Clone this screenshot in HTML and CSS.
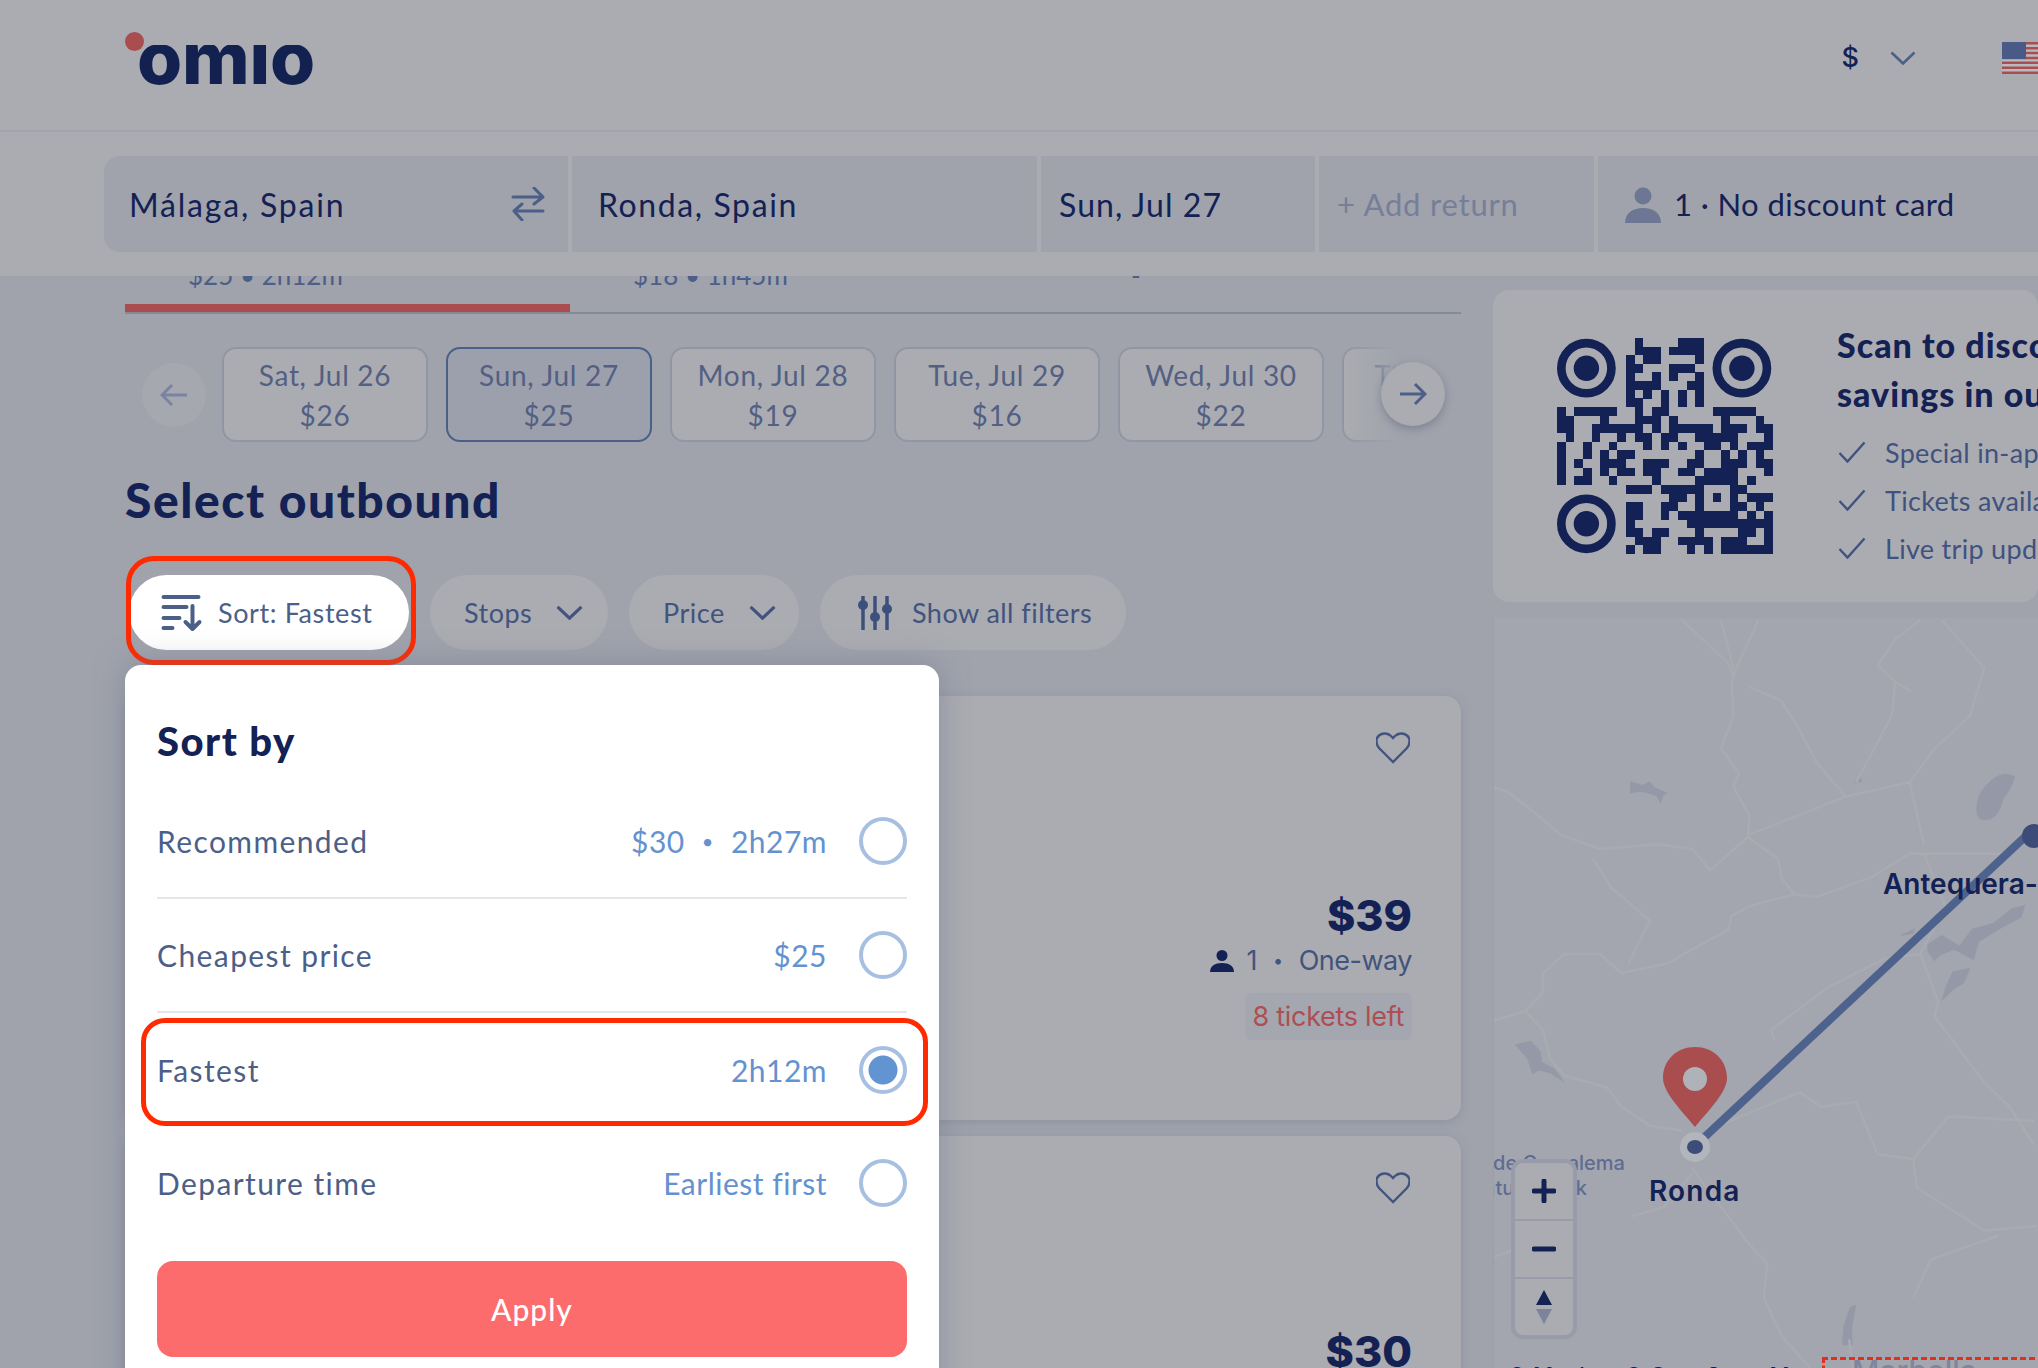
FILE: index.html
```html
<!DOCTYPE html>
<html lang="en">
<head>
<meta charset="utf-8">
<title>Omio - Select outbound</title>
<link rel="stylesheet" href="styles.css">
</head>
<body>
<div class="page">
  <header class="topbar">
    <div class="logo"><span class="logo-dot"></span><span class="logo-text">omio</span></div>
    <div class="top-actions">
      <span class="currency">$</span>
      <svg class="chev-top" viewBox="0 0 26 14"><path d="M1.5 1.5 13 12.5 24.5 1.5"/></svg>
      <svg class="flag" viewBox="0 0 60 32">
        <rect width="60" height="32" fill="#a84e50"/>
        <path d="M0 3.7h60M0 8.6h60M0 13.5h60M0 18.4h60M0 23.3h60M0 28.2h60" stroke="#b9bac0" stroke-width="2.4"/>
        <rect width="24" height="17" fill="#4a5a86"/>
      </svg>
    </div>
  </header>

  <section class="searchbar">
    <div class="field field-from"><span>Málaga, Spain</span>
      <svg class="swap" viewBox="0 0 34 34"><path d="M2 10h29M23 1l9 9-9 7M32 24H3M11 17l-8 7 8 9"/></svg>
    </div>
    <div class="field field-to">Ronda, Spain</div>
    <div class="field field-date">Sun, Jul 27</div>
    <div class="field field-return">+ Add return</div>
    <div class="field field-pax">
      <svg class="pax-big" viewBox="0 0 36 36"><circle cx="18" cy="9" r="8.5"/><path d="M0 36c0-10 8-15 18-15s18 5 18 15z"/></svg>
      <span>1 · No discount card</span>
    </div>
  </section>

  <main class="main">
    <div class="results">
      <div class="tabs">
        <div class="tab tab-active"><span>$25 • 2h12m</span></div>
        <div class="tab"><span>$18 • 1h45m</span></div>
        <div class="tab tab-none"><span>-</span></div>
      </div>

      <div class="dates">
        <button class="arrow arrow-prev"><svg viewBox="0 0 28 24"><path d="M27 12H2M12 2 2 12l10 10"/></svg></button>
        <div class="date"><span>Sat, Jul 26</span><span>$26</span></div>
        <div class="date date-on"><span>Sun, Jul 27</span><span>$25</span></div>
        <div class="date"><span>Mon, Jul 28</span><span>$19</span></div>
        <div class="date"><span>Tue, Jul 29</span><span>$16</span></div>
        <div class="date"><span>Wed, Jul 30</span><span>$22</span></div>
        <div class="date date-cut"><span>Thu, Jul 31</span><span>$24</span></div>
        <div class="date-fade"></div>
        <button class="arrow arrow-next"><svg viewBox="0 0 28 24"><path d="M1 12h25M16 2l10 10-10 10"/></svg></button>
      </div>

      <h1 class="heading">Select outbound</h1>

      <div class="chips">
        <button class="chip chip-sort">
          <svg class="ico-sort" viewBox="0 0 36 36"><path d="M1 2h35M1 12h23M1 23h16M1 33h9M30 11v23M23 27l7 7 7-7"/></svg>
          Sort: Fastest
        </button>
        <button class="chip chip-stops">Stops <svg class="chev" viewBox="0 0 26 14"><path d="M1.5 1.5 13 12.5 24.5 1.5"/></svg></button>
        <button class="chip chip-price">Price <svg class="chev" viewBox="0 0 26 14"><path d="M1.5 1.5 13 12.5 24.5 1.5"/></svg></button>
        <button class="chip chip-all">
          <svg class="ico-filter" viewBox="0 0 34 34"><path class="sl" d="M5 1v32M17 1v32M29 1v32"/><circle cx="5" cy="9" r="5"/><circle cx="17" cy="21" r="5"/><circle cx="29" cy="13" r="5"/></svg>
          Show all filters
        </button>
      </div>

      <article class="card">
        <svg class="heart" viewBox="0 0 34 32"><path d="M17 30 3.5 16.5C-.5 12-.5 6.500 3 3.500c3.500-3 9-2.500 12 .5l2 2 2-2c3-3 8.500-3.500 12-.5s3.500 8.500-.5 13z"/></svg>
        <div class="fare">
          <div class="price">$39</div>
          <div class="fare-meta">
            <svg class="pax-small" viewBox="0 0 24 22"><circle cx="12" cy="5.500" r="5.500"/><path d="M0 22c0-6 5-9 12-9s12 3 12 9z"/></svg>
            <span>1</span><span class="dot">•</span><span>One-way</span>
          </div>
          <div class="left-badge">8 tickets left</div>
        </div>
      </article>
      <article class="card card-next">
        <svg class="heart" viewBox="0 0 34 32"><path d="M17 30 3.500 16.500C-.5 12-.5 6.500 3 3.500c3.500-3 9-2.500 12 .5l2 2 2-2c3-3 8.500-3.500 12-.5s3.500 8.500-.5 13z"/></svg>
        <div class="fare"><div class="price">$30</div></div>
      </article>
    </div>

    <aside class="side">
      <section class="promo">
        <svg class="qr" viewBox="0 0 25 25">
          <g class="finder"><circle cx="3.400" cy="3.500" r="2.900"/><circle cx="21.400" cy="3.500" r="2.900"/><circle cx="3.400" cy="21.500" r="2.900"/></g>
          <g class="finder-dot"><circle cx="3.400" cy="3.500" r="1.470"/><circle cx="21.400" cy="3.500" r="1.470"/><circle cx="3.400" cy="21.500" r="1.470"/></g>
          <path class="modules" d="M9 .5h1M14 .5h3M9 1.500h3M13 1.500h4M8 2.500h1M10 2.500h2M16 2.500h1M8 3.500h2M13 3.500h3M8 4.500h1M11 4.500h1M13 4.500h1M16 4.500h1M8 5.500h4M15 5.500h2M8 6.500h1M10 6.500h1M12 6.500h1M14 6.500h1M16 6.500h1M8 7.500h2M12 7.500h1M14 7.500h1M16 7.500h1M0 8.500h1M2 8.500h5M9 8.500h1M11 8.500h2M18 8.500h5M0 9.500h2M5 9.500h1M9 9.500h3M13 9.500h1M19 9.500h1M23 9.500h1M0 10.500h2M4 10.500h6M11 10.500h1M13 10.500h5M19 10.500h3M23 10.500h2M1 11.500h1M4 11.500h1M7 11.500h1M9 11.500h2M12 11.500h2M16 11.500h5M24 11.500h1M0 12.500h1M3 12.500h1M6 12.500h1M10 12.500h1M12 12.500h1M14 12.500h1M17 12.500h2M20 12.500h1M22 12.500h3M0 13.500h1M3 13.500h1M5 13.500h1M7 13.500h2M16 13.500h1M19 13.500h1M21 13.500h1M23 13.500h1M0 14.500h1M2 14.500h1M5 14.500h3M10 14.500h3M15 14.500h2M19 14.500h3M23 14.500h2M0 15.500h1M3 15.500h1M5 15.500h1M7 15.500h2M10 15.500h2M14 15.500h2M17 15.500h4M24 15.500h1M0 16.500h1M2 16.500h2M6 16.500h1M11 16.500h1M16 16.500h5M22 16.500h1M8 17.500h3M12 17.500h5M20 17.500h2M13 18.500h2M16 18.500h1M18 18.500h1M20 18.500h1M22 18.500h3M8 19.500h2M12 19.500h2M16 19.500h1M20 19.500h2M23 19.500h1M8 20.500h2M12 20.500h1M14 20.500h7M22 20.500h1M24 20.500h1M8 21.500h1M15 21.500h5M20 21.500h5M8 22.500h2M11 22.500h2M16 22.500h1M21 22.500h2M24 22.500h1M9 23.500h3M14 23.500h4M19 23.500h3M24 23.500h1M8 24.500h1M10 24.500h2M15 24.500h1M17 24.500h1M19 24.500h6"/>
        </svg>
        <div class="promo-text">
          <h2 class="promo-title">Scan to discover<br>savings in our app</h2>
          <ul class="promo-list">
            <li><svg class="tick" viewBox="0 0 28 22"><path d="M1.500 12l8 8.500L26.500 1.500"/></svg>Special in-app deals</li>
            <li><svg class="tick" viewBox="0 0 28 22"><path d="M1.500 12l8 8.500L26.500 1.500"/></svg>Tickets available offline</li>
            <li><svg class="tick" viewBox="0 0 28 22"><path d="M1.500 12l8 8.500L26.500 1.500"/></svg>Live trip updates</li>
          </ul>
        </div>
      </section>

      <section class="map">
        <svg class="map-art" viewBox="0 0 544 750">
          <g transform="translate(-14 2) scale(.3559 .4771)">
            <g class="lakes">
              <path d="M1398 400c0-35 18-48 38-62 25-18 50-18 70-10-6 22-22 34-34 50-8 22-18 36-38 40-18 4-36 2-36-18z"/>
              <path d="M425 338l35 8 20-8 12 12 38 12-12 6-8 18-10-16-30-8-22-2-24 4z"/>
              <path d="M100 890l45-8 28 22 4 22 35 14 30 30-42-20-30-6-20 8-14-32z"/>
              <path d="M1185 660l40-14-5 12-35 4zM1260 680l40-20 50 22 35-35 60-12 50-30 40-8-10 26-50 20-40 18-30 14-15 38-25-10-30-12-40 12-15 12-20-20z"/>
              <path d="M1298 800l15-35 18-28 50-8-18 32-30 14z"/>
              <path d="M1020 1520l4-40 18-40 18-5-12 50 2 35z"/>
              <path d="M1052 340l20-12 4 12z"/>
            </g>
            <g class="roads">
              <path d="M570 0 700 90l15 25L785 0M680 0l35 100"/>
              <path d="M715 115l-5 25 5 60-35 70 50 50-15 30 45 60-5 45-105 70-50-45-100-10-160 10-110-30-80-50-70-40-40-10"/>
              <path d="M755 455l85 45 10 40 35 35 65 5 150-40 110-50 90 0 200 0"/>
              <path d="M885 575l-125 25-50 20-10 30-100 40-70 30-130 20-60-40-100 0-60 40 0 40-50 40-90 20"/>
              <path d="M130 820l50 40 20 60 40 35 120 25 40 40 80 40 90 10"/>
              <path d="M320 500l50 60 110 70-60 90"/>
              <path d="M760 140l90 30 50 60 50 70 80 70 180-30 40 130M1030 370l-270 80"/>
              <path d="M1210 340l70-70 100-70 40-100-120-100M1170 130l-50-35 50-55 70-40M1170 130l45 20M1170 130l-10 70-100 140"/>
              <path d="M1250 490l60 110-70 100 50 100-10 30 70 70 70 70 70 50 70 80"/>
              <path d="M640 1070l260-80 60 30 100-10 60 110 100 10 100-90 240 10"/>
              <path d="M1220 1130l10 60 190 90 148-10M830 880l-10-20 160-90 160-60 100-10"/>
              <path d="M600 1150l90 90 60 60 60 50-10 70 50 80 80 68M430 1250l90-20 80-70M1220 1420l50-80 190-50"/>
              <path d="M180 1300 20 1340M1050 1568l-10-60"/>
            </g>
          </g>
          <path class="route" d="M201 529 534 217"/>
        </svg>

        <span class="route-end"></span>
        <span class="place place-ant">Antequera-</span>
        <span class="park">Sierra de Grazalema<br>Natural Park</span>
        <span class="stop-ring"><span class="stop-dot"></span></span>
        <svg class="pin" viewBox="0 0 64 80"><path d="M32 0C14 0 0 13 0 31c0 14 18 32 32 49 14-17 32-35 32-49C64 13 50 0 32 0z"/><circle class="pin-hole" cx="32" cy="32" r="12"/></svg>
        <span class="place place-ronda">Ronda</span>

        <div class="map-ctrl">
          <div class="ctrl-cell"><svg class="ctrl-plus" viewBox="0 0 24 24"><path d="M2 12h20M12 2v20"/></svg></div>
          <div class="ctrl-cell"><svg class="ctrl-plus" viewBox="0 0 24 24"><path d="M2 12h20"/></svg></div>
          <div class="ctrl-cell"><svg class="ctrl-comp" viewBox="0 0 16 34"><path d="M8 0l8 15H0z"/><path class="down" d="M0 19h16L8 34z"/></svg></div>
        </div>

        <div class="attrib">© Mapbox © OpenStreetMap</div>
        <div class="dashed"><span class="town">Marbella</span></div>
      </section>
    </aside>
  </main>

  <div class="sort-mark"></div>

  <div class="popup">
    <h2 class="popup-title">Sort by</h2>
    <div class="opt opt-line"><span class="opt-name">Recommended</span><span class="opt-val">$30<i class="sep">•</i>2h27m</span><span class="radio"></span></div>
    <div class="opt opt-line"><span class="opt-name">Cheapest price</span><span class="opt-val">$25</span><span class="radio"></span></div>
    <div class="opt opt-marked"><span class="opt-name">Fastest</span><span class="opt-val">2h12m</span><span class="radio radio-on"></span></div>
    <div class="opt"><span class="opt-name">Departure time</span><span class="opt-val">Earliest first</span><span class="radio"></span></div>
    <button class="apply">Apply</button>
  </div>
</div>
</body>
</html>
```

FILE: styles.css
```css
* { box-sizing: border-box; }
html, body { margin: 0; padding: 0; }
body { font-family: "Lato", "Noto Sans", sans-serif; color: #132154; background: #a0a3ac; }
button { font: inherit; color: inherit; border: 0; padding: 0; }
h1, h2, ul { margin: 0; padding: 0; }
svg { display: block; flex: none; }

.page { position: relative; width: 2038px; height: 1368px; overflow: hidden; background: #a0a3ac; }

/* header */
.topbar { height: 132px; background: #abacb1; border-bottom: 2px solid #a2a4af; display: flex; align-items: center; justify-content: space-between; padding: 0 0 14px 125px; }
.logo { position: relative; width: 190px; height: 60px; }
.logo-dot { position: absolute; left: 0; top: 4px; width: 19px; height: 19px; border-radius: 50%; background: #a94d4e; }
.logo-text { position: absolute; left: 12px; top: 0; font: 800 73px/60px "Inter", sans-serif; color: #12214f; letter-spacing: -.2px; clip-path: inset(17px -5px -2px -5px); }
.top-actions { display: flex; align-items: center; margin-right: -24px; }
.currency { font: 500 27px/32px "Inter", sans-serif; }
.chev-top { width: 26px; height: 14px; margin-left: 31px; fill: none; stroke: #4c5f88; stroke-width: 2.600; }
.flag { width: 60px; height: 32px; margin-left: 86px; }

/* search */
.searchbar { height: 144px; background: #abacb1; display: flex; gap: 4px; padding: 24px 0 24px 104px; }
.field { flex: none; height: 96px; background: #a0a3ac; display: flex; align-items: center; font-size: 32px; letter-spacing: 1.6px; }
.field-from { width: 464px; padding: 0 23px 0 25px; justify-content: space-between; border-radius: 16px 0 0 16px; letter-spacing: 1.8px; }
.field-to { width: 465px; padding-left: 26px; }
.field-date { width: 274px; padding-left: 18px; letter-spacing: 1.1px; }
.field-return { width: 275px; padding-left: 18px; color: #767e99; font-size: 31px; letter-spacing: .8px; }
.field-pax { width: 460px; padding-left: 27px; gap: 13px; font-size: 31px; letter-spacing: .4px; }
.swap { width: 34px; height: 34px; fill: none; stroke: #4c5f88; stroke-width: 3; stroke-linecap: round; stroke-linejoin: round; }
.pax-big { width: 36px; height: 36px; fill: #6d7693; margin-top: 2px; }

/* layout */
.main { display: flex; gap: 32px; height: 1092px; overflow: hidden; }
.results { flex: none; width: 1461px; padding-left: 125px; }
.side { flex: none; width: 545px; padding-top: 14px; }

/* tabs */
.tabs { height: 38px; display: flex; overflow: hidden; border-bottom: 2px solid #858a9a; }
.tab { flex: none; width: 445px; height: 36px; padding-left: 63px; position: relative; font-size: 26px; line-height: 34px; color: #4c5f88; }
.tab span { display: block; margin-top: -18px; }
.tab-active::after { content: ""; position: absolute; left: 0; right: 0; bottom: 0; height: 8px; background: #a94d4e; }
.tab-none { padding-left: 116px; }

/* dates */
.dates { position: relative; height: 95px; margin-top: 33px; margin-left: 17px; width: 1303px; display: flex; gap: 18px; overflow: clip; overflow-clip-margin: 20px; }
.arrow { width: 64px; height: 64px; border-radius: 50%; background: #a6a8b0; display: flex; align-items: center; justify-content: center; align-self: center; flex: none; }
.arrow svg { width: 28px; height: 24px; fill: none; stroke: #7a84a0; stroke-width: 3; }
.arrow-prev { margin-right: -2px; }
.arrow-next { position: absolute; right: 0; top: 15px; background: #abacb1; box-shadow: 0 3px 8px rgba(60, 70, 100, .35); }
.arrow-next svg { stroke: #4c5f88; }
.date { flex: none; width: 206px; height: 95px; border: 2px solid #9196a7; border-radius: 14px; background: #abacb1; display: flex; flex-direction: column; align-items: center; justify-content: center; gap: 6px; font-size: 28px; line-height: 34px; color: #535f83; letter-spacing: .7px; }
.date-on { background: #9ca0ac; border-color: #4c5f88; }
.date-fade { position: absolute; right: -20px; top: 0; width: 123px; height: 95px; background: linear-gradient(90deg, rgba(160, 163, 172, 0), #a0a3ac 46%); }

/* heading + chips */
.heading { font-size: 48px; line-height: 54px; font-weight: 900; margin-top: 31px; letter-spacing: 1.55px; }
.chips { display: flex; gap: 21px; margin-top: 48px; padding-left: 4px; }
.chip { height: 75px; border-radius: 38px; background: #abacb1; display: flex; align-items: center; font-size: 27px; color: #42537e; letter-spacing: .5px; }
.chip-sort { width: 280px; padding-left: 33px; gap: 19px; background: #fff; color: #4c5f88; letter-spacing: .6px; }
.chip-stops { width: 178px; padding-left: 34px; gap: 24px; }
.chip-price { width: 170px; padding-left: 34px; gap: 24px; }
.chip-all { width: 306px; padding-left: 38px; gap: 20px; letter-spacing: .45px; }
.chev { width: 27px; height: 15px; fill: none; stroke: #42537e; stroke-width: 3; }
.ico-sort { width: 37px; height: 36px; fill: none; stroke: #4c5f88; stroke-width: 4; stroke-linecap: round; stroke-linejoin: round; overflow: visible; }
.ico-filter { width: 34px; height: 34px; fill: #3d4f7c; }
.ico-filter .sl { fill: none; stroke: #3d4f7c; stroke-width: 3.500; stroke-linecap: round; }

/* cards */
.card { width: 1336px; height: 424px; margin-top: 46px; border-radius: 16px; background: #abacb1; box-shadow: 0 2px 10px rgba(110, 116, 140, .35); padding: 36px 49px 0 0; display: flex; flex-direction: column; align-items: flex-end; }
.card-next { margin-top: 16px; }
.heart { width: 34px; height: 32px; margin-right: 2px; fill: none; stroke: #42537e; stroke-width: 2.400; }
.fare { margin-top: 125px; display: flex; flex-direction: column; align-items: flex-end; }
.card-next .fare { margin-top: 121px; }
.price { font: 800 43px/52px "Inter", sans-serif; }
.fare-meta { display: flex; align-items: center; gap: 14px; margin-top: 2px; height: 36px; font: 400 27px/36px "Inter", sans-serif; color: #42537e; letter-spacing: -.5px; }
.pax-small { width: 24px; height: 22px; fill: #132154; margin-right: -1px; }
.dot { font-size: 18px; margin: 0 2px; }
.left-badge { height: 47px; margin-top: 14px; padding: 0 8px; border-radius: 6px; background: #a5a7b0; color: #ad4f52; font: 400 27px/47px "Inter", sans-serif; letter-spacing: -.3px; }

/* promo */
.promo { height: 312px; border-radius: 16px; background: #abacb1; padding: 48px 0 0 64px; display: flex; gap: 64px; overflow: hidden; }
.qr { width: 216px; height: 216px; }
.finder { fill: none; stroke: #132154; stroke-width: 1; }
.finder-dot { fill: #132154; }
.modules { fill: none; stroke: #132154; stroke-width: 1.020; shape-rendering: crispEdges; }
.promo-text { flex: none; width: 600px; margin-top: -18px; }
.promo-title { font-size: 34px; line-height: 49px; font-weight: 900; white-space: nowrap; letter-spacing: 1px; }
.promo-list { list-style: none; margin-top: 10px; }
.promo-list li { display: flex; align-items: center; gap: 19px; height: 48px; font-size: 27px; color: #3f5280; letter-spacing: .3px; padding-left: 1px; white-space: nowrap; }
.tick { width: 28px; height: 22px; fill: none; stroke: #3f5280; stroke-width: 2.400; }

/* map */
.map { position: relative; height: 750px; margin-top: 16px; overflow: hidden; background: #a3a6af; border-left: 1px solid #9a9dab; }
.map-art { position: absolute; left: -1px; top: 0; width: 544px; height: 750px; }
.lakes { fill: #9599a7; }
.roads { fill: none; stroke: #a9abb3; stroke-width: 2.500; stroke-linejoin: round; }
.roads path { vector-effect: non-scaling-stroke; }
.route { fill: none; stroke: #4e628e; stroke-width: 8; }
.route-end { position: absolute; left: 528px; top: 206px; width: 24px; height: 24px; border-radius: 50%; background: #3c4b78; }
.place { position: absolute; font: 600 28px/34px "Inter", sans-serif; color: #132154; }
.place-ant { left: 389px; top: 249px; white-space: nowrap; }
.place-ronda { left: 155px; top: 556px; letter-spacing: 1.2px; }
.park { position: absolute; left: -64px; top: 533px; width: 196px; font: 500 20px/25px "Inter", sans-serif; color: #5f6c92; text-align: center; white-space: nowrap; }
.stop-ring { position: absolute; left: 186px; top: 514px; width: 30px; height: 30px; border-radius: 50%; background: #b3b5bc; display: flex; align-items: center; justify-content: center; }
.stop-dot { width: 16px; height: 14px; border-radius: 50%; background: #3d4c78; }
.pin { position: absolute; left: 169px; top: 429px; width: 64px; height: 80px; fill: #a94d4e; }
.pin .pin-hole { fill: #b0b2b9; }
.map-ctrl { position: absolute; left: 17px; top: 541px; width: 66px; height: 180px; border: 4px solid #979baa; border-radius: 12px; background: #abacb1; display: flex; flex-direction: column; }
.ctrl-cell { height: 58px; flex: none; display: flex; align-items: center; justify-content: center; border-bottom: 2px solid #979baa; }
.ctrl-cell:last-child { border-bottom: 0; flex: 1; }
.ctrl-plus { width: 24px; height: 24px; fill: none; stroke: #132154; stroke-width: 5; stroke-linecap: round; }
.ctrl-comp { width: 16px; height: 34px; fill: #132154; }
.ctrl-comp .down { fill: #7d839a; }
.attrib { position: absolute; left: 13px; top: 744px; font: 500 22px/26px "Inter", sans-serif; white-space: nowrap; }
.dashed { position: absolute; left: 328px; top: 739px; width: 240px; height: 40px; border: 3px dashed #e0301a; }
.town { position: absolute; left: 27px; top: -6px; font: 500 30px/34px "Inter", sans-serif; color: #7f869c; }

/* annotations + popup */
.sort-mark { position: absolute; left: 126px; top: 556px; width: 290px; height: 109px; border: 5px solid #ff2a00; border-radius: 28px; }
.popup { position: absolute; left: 125px; top: 665px; width: 814px; height: 760px; border-radius: 16px; background: #fff; padding: 57px 32px 0; box-shadow: 0 0 30px rgba(110, 116, 140, .5); }
.popup-title { font-size: 40px; line-height: 38px; font-weight: 900; margin-bottom: 25px; letter-spacing: 1.5px; }
.opt { position: relative; height: 114px; display: flex; align-items: center; font-size: 30px; letter-spacing: .4px; }
.opt-line { border-bottom: 2px solid #e4e6ec; }
.opt-marked { height: 113px; }
.opt-marked::after { content: ""; position: absolute; left: -16px; right: -21px; top: 5px; bottom: 0; border: 5px solid #ff2a00; border-radius: 24px; }
.opt-name { flex: 1; color: #4c5f88; letter-spacing: 1.4px; }
.opt-val { color: #6492d0; margin-right: 32px; display: flex; align-items: center; letter-spacing: .5px; }
.sep { font-style: normal; font-size: 20px; margin: 0 17px; }
.radio { width: 48px; height: 48px; border-radius: 50%; border: 4px solid #a7c0e2; background: #fff; flex: none; }
.radio-on { background: radial-gradient(circle, #6394d2 0 14px, #fff 15px); }
.apply { display: block; width: 100%; height: 96px; margin-top: 21px; border-radius: 16px; background: #fc6c6c; color: #fff; font-size: 30px; font-weight: 500; letter-spacing: 1px; }
```
